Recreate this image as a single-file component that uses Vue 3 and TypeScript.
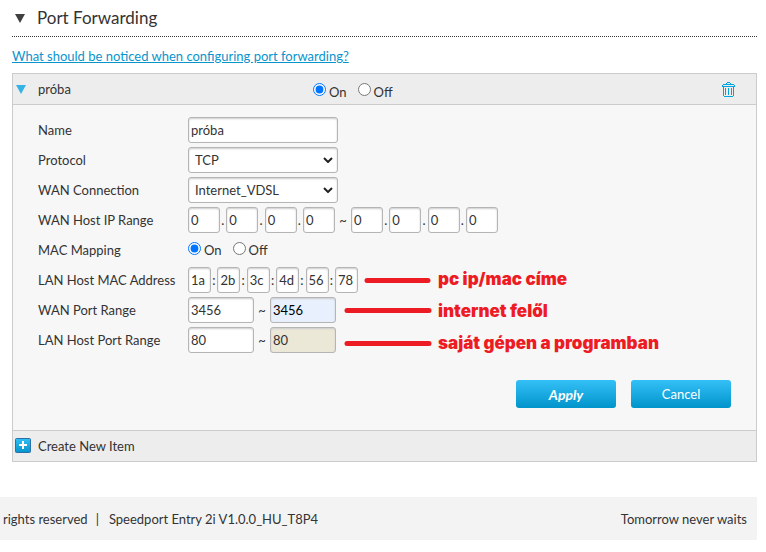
<script setup lang="ts">
import { ref } from 'vue'

const ruleName = ref('próba')
const enabled = ref('on')
const protocol = ref('TCP')
const connection = ref('Internet_VDSL')
const ipStart = ref(['0', '0', '0', '0'])
const ipEnd = ref(['0', '0', '0', '0'])
const macMapping = ref('on')
const mac = ref(['1a', '2b', '3c', '4d', '56', '78'])
const wanPort = ref(['3456', '3456'])
const lanPort = ref(['80', '80'])
</script>

<template>
  <main class="page">
    <h1 class="title">
      <svg class="title-arrow" viewBox="0 0 10 9" aria-hidden="true"><path d="M0 0h10L5 9z" /></svg>
      <span>Port Forwarding</span>
    </h1>
    <a class="help" href="#help">What should be noticed when configuring port forwarding?</a>

    <section class="panel">
      <header class="bar">
        <svg class="bar-arrow" viewBox="0 0 10 9" aria-hidden="true"><path d="M0 0h10L5 9z" /></svg>
        <span class="bar-name">{{ ruleName }}</span>
        <div class="radios" role="radiogroup" aria-label="Rule">
          <label class="radio"><input v-model="enabled" type="radio" name="enabled" value="on" /><span>On</span></label>
          <label class="radio"><input v-model="enabled" type="radio" name="enabled" value="off" /><span>Off</span></label>
        </div>
        <button class="trash" type="button" aria-label="Delete">
          <svg viewBox="0 0 13 15" shape-rendering="crispEdges" aria-hidden="true">
            <path d="M5 0h3v1h-3zM4 1h1v1h-1zM8 1h1v1h-1zM1 2h11v1h-11zM0 3h1v2h-1zM12 3h1v2h-1zM1 4h11v1h-11zM1 5h1v9h-1zM11 5h1v9h-1zM3 6h1v7h-1zM6 6h1v7h-1zM9 6h1v7h-1zM2 14h9v1h-9z" />
          </svg>
        </button>
      </header>

      <form class="form" @submit.prevent>
        <div class="row">
          <label class="label" for="name">Name</label>
          <input id="name" v-model="ruleName" class="field wide" type="text" />
        </div>
        <div class="row">
          <label class="label" for="protocol">Protocol</label>
          <div class="select">
            <select id="protocol" v-model="protocol" class="field wide">
              <option>TCP</option>
              <option>UDP</option>
            </select>
            <svg class="chevron" viewBox="0 0 10 6" aria-hidden="true"><path d="M1 1l4 4l4-4" /></svg>
          </div>
        </div>
        <div class="row">
          <label class="label" for="connection">WAN Connection</label>
          <div class="select">
            <select id="connection" v-model="connection" class="field wide">
              <option>Internet_VDSL</option>
            </select>
            <svg class="chevron" viewBox="0 0 10 6" aria-hidden="true"><path d="M1 1l4 4l4-4" /></svg>
          </div>
        </div>
        <div class="row">
          <label class="label" for="ip-start-0">WAN Host IP Range</label>
          <div class="group ip">
            <template v-for="(_, i) in ipStart" :key="i">
              <span v-if="i > 0" class="sep">.</span>
              <input :id="`ip-start-${i}`" v-model="ipStart[i]" class="field octet" type="text" :aria-label="`Start octet ${i + 1}`" />
            </template>
          </div>
          <span class="tilde">~</span>
          <div class="group ip">
            <template v-for="(_, i) in ipEnd" :key="i">
              <span v-if="i > 0" class="sep">.</span>
              <input v-model="ipEnd[i]" class="field octet" type="text" :aria-label="`End octet ${i + 1}`" />
            </template>
          </div>
        </div>
        <div class="row">
          <span id="mapping" class="label">MAC Mapping</span>
          <div class="radios" role="radiogroup" aria-labelledby="mapping">
            <label class="radio"><input v-model="macMapping" type="radio" name="mapping" value="on" /><span>On</span></label>
            <label class="radio"><input v-model="macMapping" type="radio" name="mapping" value="off" /><span>Off</span></label>
          </div>
        </div>
        <div class="row">
          <label class="label" for="mac-0">LAN Host MAC Address</label>
          <div class="group mac">
            <template v-for="(_, i) in mac" :key="i">
              <span v-if="i > 0" class="sep">:</span>
              <input :id="`mac-${i}`" v-model="mac[i]" class="field pair" type="text" :aria-label="`MAC byte ${i + 1}`" />
            </template>
          </div>
        </div>
        <div class="row">
          <label class="label" for="wan-port">WAN Port Range</label>
          <input id="wan-port" v-model="wanPort[0]" class="field port" type="text" />
          <span class="tilde">~</span>
          <input v-model="wanPort[1]" class="field port filled" type="text" aria-label="WAN port end" />
        </div>
        <div class="row">
          <label class="label" for="lan-port">LAN Host Port Range</label>
          <input id="lan-port" v-model="lanPort[0]" class="field port" type="text" />
          <span class="tilde">~</span>
          <input v-model="lanPort[1]" class="field port disabled" type="text" aria-label="LAN port end" disabled />
        </div>

        <div class="actions">
          <button class="button apply" type="submit">Apply</button>
          <button class="button" type="button">Cancel</button>
        </div>

        <!-- hand-made notes laid over the form -->
        <div class="notes">
          <svg class="strokes" viewBox="0 0 90 96" aria-hidden="true">
            <path d="M23 17.500H84M3 47.500H85M3 80.500H85" />
          </svg>
          <ul class="note-list">
            <li>pc ip/mac címe</li>
            <li>internet felől</li>
            <li>saját gépen a programban</li>
          </ul>
        </div>
      </form>

      <footer class="bar create">
        <button class="create-button" type="button">
          <svg class="plus" viewBox="0 0 16 16" aria-hidden="true">
            <defs>
              <linearGradient id="plus-fill" x1="0" y1="0" x2="0" y2="1">
                <stop offset="0" stop-color="#2fc0f5" />
                <stop offset="1" stop-color="#0594cb" />
              </linearGradient>
            </defs>
            <rect x="0.500" y="0.500" width="15" height="14" rx="1" fill="url(#plus-fill)" stroke="#2d6fa8" />
            <path d="M4 7h8M8 3v8" stroke="#fff" stroke-width="2" />
          </svg>
          <span>Create New Item</span>
        </button>
      </footer>
    </section>
  </main>

  <footer class="site-footer">
    <span>rights reserved</span>
    <span class="divider">|</span>
    <span>Speedport Entry 2i V1.0.0_HU_T8P4</span>
    <span class="slogan">Tomorrow never waits</span>
  </footer>
</template>

<style>
body {
  background: #fff;
}
</style>

<style scoped>
.page,
.site-footer {
  font-family: Lato, "Open Sans", sans-serif;
  font-size: 13px;
  line-height: 20px;
  color: #333;
  margin-right: 9px;
}
.page {
  padding: 0 0 35px 12px;
}
.title {
  display: flex;
  align-items: center;
  gap: 12px;
  height: 36px;
  margin: 0;
  padding-left: 3px;
  border-bottom: 1px dotted #333;
  font-size: 17px;
  font-weight: 400;
  color: #333;
}
.title-arrow {
  width: 10px;
  height: 9px;
  fill: #404040;
}
.help {
  display: block;
  width: fit-content;
  margin: 9px 0 7px;
  color: #0a94cc;
}
.panel {
  border: 1px solid #ccc;
  background: #f7f7f7;
}
.bar {
  display: flex;
  align-items: center;
  height: 30px;
  background: #ededed;
  border-bottom: 1px solid #ccc;
}
.bar-arrow {
  width: 10px;
  height: 9px;
  margin: 0 12px 0 3px;
  fill: #36b3e4;
}
.bar-name {
  width: 275px;
}
.radios {
  display: flex;
  gap: 11px;
}
.bar .radios {
  padding-top: 5px;
}
.radio {
  display: flex;
  align-items: center;
  gap: 3px;
}
.radio input {
  width: 13px;
  height: 13px;
  margin: 0 0 4px;
}
.trash {
  display: flex;
  margin: 0 21px 0 auto;
  padding: 0;
  border: 0;
  background: none;
}
.trash svg {
  width: 13px;
  height: 15px;
  fill: #00a5e0;
}
.form {
  position: relative;
  padding: 10px 25px 22px;
}
.row {
  display: flex;
  align-items: center;
  height: 30px;
}
.label {
  width: 150px;
  white-space: nowrap;
}
.field {
  box-sizing: border-box;
  height: 26px;
  margin: 0;
  padding: 0 2px;
  border: 1px solid #b5b5b5;
  border-radius: 3px;
  background: #fff;
  box-shadow: inset 0 1px 2px #ccc;
  font-family: inherit;
  font-size: 13px;
  color: #333;
}
.wide {
  width: 150px;
}
.select {
  position: relative;
}
select.field {
  display: block;
  appearance: none;
  padding-left: 6px;
}
.chevron {
  position: absolute;
  right: 5px;
  top: 10px;
  width: 10px;
  height: 6px;
  fill: none;
  stroke: #222;
  stroke-width: 2;
  pointer-events: none;
}
.group {
  display: flex;
  justify-content: space-between;
}
.ip {
  width: 147px;
}
.mac {
  width: 170px;
}
.sep {
  width: 4px;
  line-height: 26px;
}
.octet {
  width: 32px;
}
.pair {
  width: 23px;
}
.port {
  width: 66px;
}
.filled {
  background: #e8f0fe;
  color: #000;
}
.disabled {
  background: #ebe8d8;
}
.tilde {
  width: 16px;
  text-align: center;
}
.actions {
  display: flex;
  justify-content: flex-end;
  gap: 15px;
  margin-top: 25px;
}
.button {
  width: 100px;
  height: 28px;
  padding: 0;
  border: 0;
  border-radius: 3px;
  background: linear-gradient(#34c0f7, #0094cb);
  font-family: inherit;
  font-size: 13px;
  color: #fff;
}
.apply {
  font-weight: 700;
  font-style: italic;
  font-size: 14px;
}
.notes {
  position: absolute;
  top: 158px;
  left: 331px;
  display: flex;
  gap: 4px;
  pointer-events: none;
}
.strokes {
  width: 90px;
  height: 96px;
  fill: none;
  stroke: #ed1c24;
  stroke-width: 5;
  stroke-linecap: round;
}
.note-list {
  margin: 0;
  padding: 0;
  list-style: none;
  font-family: Inter, "Liberation Sans", sans-serif;
  font-size: 17px;
  font-weight: 900;
  line-height: 32px;
  white-space: nowrap;
  color: #ed1c24;
}
.create {
  border-top: 1px solid #ccc;
  border-bottom: 0;
}
.create-button {
  display: flex;
  align-items: center;
  gap: 7px;
  padding: 0 0 0 2px;
  border: 0;
  background: none;
  font: inherit;
  color: inherit;
}
.plus {
  width: 16px;
  height: 16px;
}
.site-footer {
  display: flex;
  align-items: center;
  height: 43px;
  padding: 0 10px 0 3px;
  background: #f3f3f3;
}
.divider {
  margin: 0 10px 0 8px;
}
.slogan {
  margin-left: auto;
}
</style>
